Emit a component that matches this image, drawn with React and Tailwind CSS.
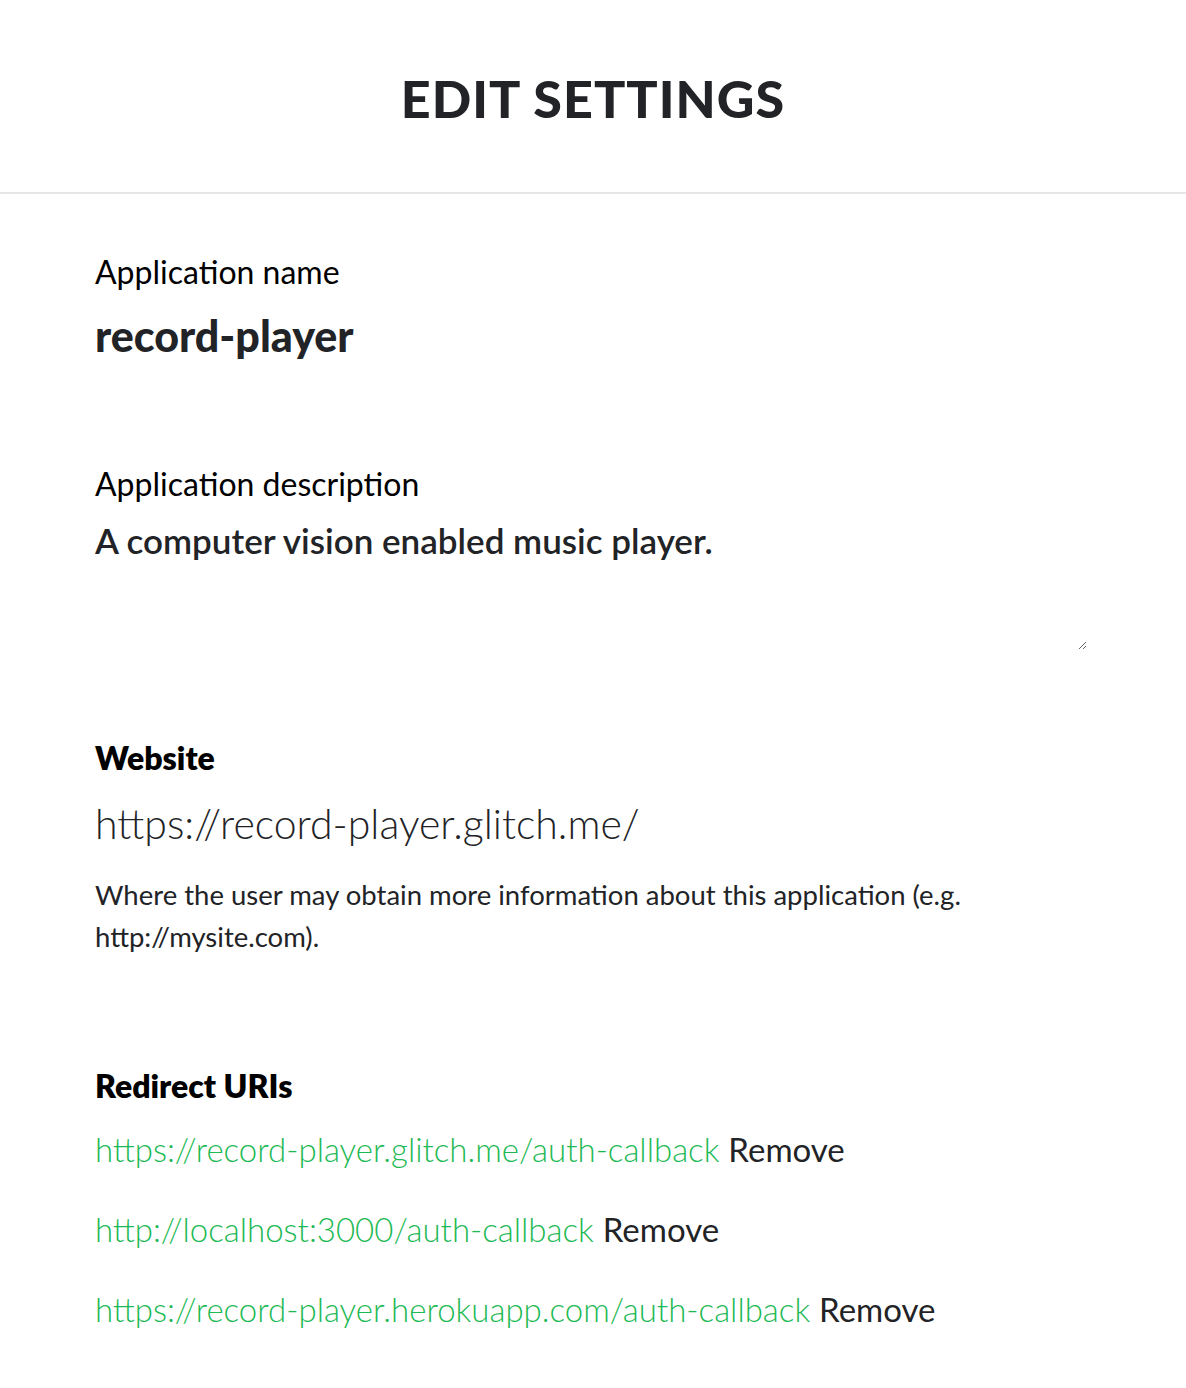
import React from 'react';

const uris = [
  'https://record-player.glitch.me/auth-callback',
  'http://localhost:3000/auth-callback',
  'https://record-player.herokuapp.com/auth-callback',
];

export default function App() {
  return (
    <div className="min-h-[1388px] bg-white text-[#222326]" style={{ fontFamily: 'Lato, "Noto Sans", sans-serif' }}>
      <header className="h-[194px] border-b-2 border-[#e6e6e6] flex items-center justify-center">
        <h1 className="text-[52px] font-black tracking-[0.02em] leading-none pt-[4px]">EDIT SETTINGS</h1>
      </header>

      <main className="px-[95px] pt-[56px]">
        <section>
          <label className="block text-[32px] text-black leading-[44px]">Application name</label>
          <div className="mt-[20px] text-[43px] font-black leading-[44px]">record-player</div>
        </section>

        <section className="mt-[104px]">
          <label className="block text-[32px] text-black leading-[44px]">Application description</label>
          <textarea
            defaultValue="A computer vision enabled music player."
            className="mt-[12px] block w-[992px] h-[132px] text-[35px] font-semibold text-[#222326] leading-[44px] outline-none border-0 p-0 resize-y bg-transparent"
            style={{ fontFamily: 'Lato, "Noto Sans", sans-serif' }}
          />
        </section>

        <section className="mt-[86px]">
          <h2 className="text-[32px] font-extrabold text-black leading-[44px]">Website</h2>
          <div className="mt-[20px] text-[41px] font-light leading-[48px]">https://record-player.glitch.me/</div>
          <p className="mt-[26px] text-[27.5px] leading-[42px] max-w-[900px]">
            Where the user may obtain more information about this application (e.g. http://mysite.com).
          </p>
        </section>

        <section className="mt-[106px]">
          <h2 className="text-[32px] font-extrabold text-black leading-[44px]">Redirect URIs</h2>
          <ul className="mt-[19px] flex flex-col gap-[36px]">
            {uris.map(u => (
              <li key={u} className="text-[33px] leading-[44px] font-light">
                <a href="#" className="text-[#1db954]">{u}</a>{' '}
                <button className="text-[#222326] font-normal">Remove</button>
              </li>
            ))}
          </ul>
        </section>
      </main>
    </div>
  );
}
